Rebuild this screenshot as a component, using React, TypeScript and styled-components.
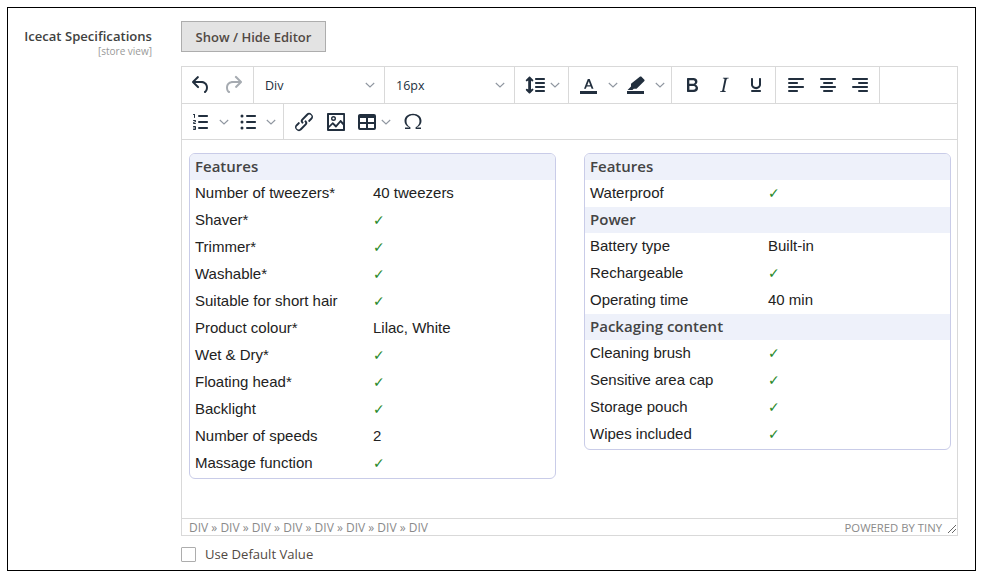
import { FC } from 'react'
import styled, { createGlobalStyle } from 'styled-components'

const GlobalStyle = createGlobalStyle`
  html, body {
    margin: 0;
    padding: 0;
    background: #fff;
  }
`

const Frame = styled.div`
  box-sizing: border-box;
  width: 969px;
  height: 564px;
  margin: 7px 0 0 7px;
  border: 1px solid #000;
  padding: 13px 17px 0 16px;
  display: grid;
  grid-template-columns: 128px 777px;
  column-gap: 29px;
  font-family: 'Open Sans', sans-serif;
`

const LabelColumn = styled.div`
  display: flex;
  flex-direction: column;
  align-items: flex-end;
  padding-top: 6px;
`

const FieldLabel = styled.span`
  font-size: 13.1px;
  line-height: 18px;
  font-weight: 600;
  color: #41423f;
  white-space: nowrap;
`

const Scope = styled.span`
  font-size: 10px;
  line-height: 13px;
  color: #999;
`

const FieldColumn = styled.div`
  display: flex;
  flex-direction: column;
  align-items: flex-start;
`

const ToggleButton = styled.button`
  box-sizing: border-box;
  width: 145px;
  height: 31px;
  padding: 0;
  background: #e3e3e3;
  border: 1px solid #adadad;
  font-family: inherit;
  font-size: 13px;
  font-weight: 600;
  color: #514943;
`

const Editor = styled.div`
  box-sizing: border-box;
  width: 777px;
  height: 470px;
  margin-top: 14px;
  border: 1px solid #d9d9d9;
  display: flex;
  flex-direction: column;
`

const ToolbarRow = styled.div<{ $height: number }>`
  display: flex;
  height: ${(props) => props.$height}px;
  flex: none;
  box-sizing: border-box;
  border-bottom: 1px solid #d9d9d9;
`

const Group = styled.div<{ $width: number; $plain?: boolean }>`
  box-sizing: border-box;
  width: ${(props) => props.$width}px;
  flex: none;
  display: flex;
  align-items: center;
  border-right: ${(props) => (props.$plain ? 'none' : '1px solid #d9d9d9')};
`

const IconSlot = styled.span<{ $width?: number; $lead?: number }>`
  flex: none;
  width: ${(props) => props.$width ?? 32}px;
  margin-left: ${(props) => props.$lead ?? 0}px;
  display: flex;
  align-items: center;
  justify-content: center;
  color: #222f3e;
`

const Select = styled.div<{ $width: number }>`
  box-sizing: border-box;
  width: ${(props) => props.$width}px;
  display: flex;
  align-items: center;
  justify-content: space-between;
  padding: 0 9px 0 11px;
  font-size: 12.5px;
  color: #222f3e;
`

const Content = styled.div`
  flex: 1;
  min-height: 0;
  display: grid;
  grid-template-columns: 367px 367px;
  column-gap: 28px;
  align-items: start;
  padding: 13px 0 0 7px;
`

const SpecTable = styled.div`
  border: 1px solid #c9cce8;
  border-radius: 6px;
  overflow: hidden;
  padding-bottom: 1px;
  font-family: 'Liberation Sans', Arial, sans-serif;
  font-size: 15px;
  color: #222;
`

const SectionHead = styled.div`
  height: 26px;
  line-height: 25px;
  padding-left: 5px;
  background: #eef1fa;
  font-family: 'Open Sans', sans-serif;
  font-size: 15px;
  font-weight: 600;
  color: #444;
`

const SpecRow = styled.div`
  box-sizing: border-box;
  height: 27px;
  display: grid;
  grid-template-columns: 178px 1fr;
  padding: 0 0 2px 5px;
  align-items: center;
`

const Tick = styled.span`
  color: #2a8a2a;
  font-family: 'DejaVu Sans', sans-serif;
  font-size: 14px;
`

const StatusBar = styled.div`
  position: relative;
  flex: none;
  height: 16px;
  border-top: 1px solid #d9d9d9;
  display: flex;
  align-items: center;
  justify-content: space-between;
  padding: 0 15px 0 7px;
  font-size: 12px;
  color: #8a8a8a;
`

const PoweredBy = styled.span`
  font-size: 11.3px;
`

const Resize = styled.svg`
  position: absolute;
  right: 0;
  bottom: 1px;
`

const DefaultRow = styled.label`
  display: flex;
  align-items: center;
  margin-top: 9px;
  font-size: 13.1px;
  color: #514943;
`

const Checkbox = styled.span`
  box-sizing: border-box;
  width: 15px;
  height: 15px;
  margin-right: 9px;
  border: 1px solid #adadad;
  border-radius: 1px;
  background: #fff;
`

const paths: Record<string, string> = {
  undo: 'M6.4 8H12c3.7 0 6.2 2 6.8 5.1.6 2.7-.4 5.6-2.3 6.8a1 1 0 0 1-1-1.8c1.1-.6 1.8-2.7 1.4-4.6-.5-2.1-2.1-3.5-4.9-3.5H6.4l3.3 3.3a1 1 0 1 1-1.4 1.4l-5-5a1 1 0 0 1 0-1.4l5-5a1 1 0 0 1 1.4 1.4L6.4 8z',
  redo: 'M17.6 10H12c-2.8 0-4.4 1.4-4.9 3.5-.4 2 .3 4 1.4 4.6a1 1 0 1 1-1 1.8c-2-1.2-2.9-4.1-2.3-6.8.6-3 3-5.1 6.8-5.1h5.6l-3.3-3.3a1 1 0 1 1 1.4-1.4l5 5a1 1 0 0 1 0 1.4l-5 5a1 1 0 0 1-1.4-1.4l3.3-3.3z',
  lineHeight:
    'M21 5a1 1 0 0 1 .1 2H13a1 1 0 0 1-.1-2H21zm0 4a1 1 0 0 1 .1 2H13a1 1 0 0 1-.1-2H21zm0 4a1 1 0 0 1 .1 2H13a1 1 0 0 1-.1-2H21zm0 4a1 1 0 0 1 .1 2H13a1 1 0 0 1-.1-2H21zM7 3.6l.1.1 3 3a1 1 0 0 1-1.3 1.5H8.7L8 7.4v9.2l.8-.7a1 1 0 0 1 1.3 0h.1c.4.4.4 1 0 1.3v.1l-3 3c-.3.3-.7.4-1 .1h-.1l-3-3a1 1 0 0 1 1.3-1.5h.1l.7.7V7.4l-.8.7a1 1 0 0 1-1.3 0H3a1 1 0 0 1 0-1.3v-.1l3-3c.3-.3.7-.4 1-.1z',
  textColor:
    'M3 18h17v3H3zM10.8 6h1.9l3.8 9.8h-1.9l-.8-2.2H9.7l-.8 2.2H7L10.8 6zm.95 2.3-1.5 3.9h3l-1.5-3.9z',
  highlight:
    'M3 18h17v3H3zM17.2 3.6l3.2 3.2c.3.3.3.8 0 1.1l-7.6 7.6c-.2.2-.5.3-.7.3H9.8l-1.4 1.2H3.6l3.4-3.4v-2.2c0-.3.1-.6.3-.8l8.8-7c.3-.3.8-.3 1.1 0z',
  bold: 'M7.8 19c-.3 0-.5 0-.6-.2l-.2-.5V5.7c0-.2 0-.4.2-.5l.6-.2h5c1.5 0 2.7.3 3.5 1 .7.6 1.1 1.4 1.1 2.5a3 3 0 0 1-.6 1.9c-.4.6-1 1-1.6 1.2.4.1.9.3 1.3.6s.8.7 1 1.2c.4.4.5 1 .5 1.6 0 1.3-.4 2.3-1.3 3-.8.7-2.1 1-3.8 1H7.8zm5-8.3c.6 0 1.2-.1 1.6-.5.4-.3.6-.7.6-1.3 0-1.1-.8-1.7-2.3-1.7H9.3v3.5h3.4zm.5 6c.7 0 1.3-.1 1.7-.4.4-.4.6-.9.6-1.5s-.2-1-.7-1.4c-.4-.3-1-.4-2-.4H9.4v3.8h4z',
  italic:
    'M16.7 4.7l-.1.9h-.3c-.6 0-1 0-1.4.3-.3.3-.4.6-.5 1.1l-2.1 9.8v.6c0 .5.4.8 1.4.8h.2l-.2.8H8l.2-.8h.2c1.1 0 1.8-.5 2-1.5l2-9.8.1-.5c0-.6-.4-.8-1.4-.8h-.3l.2-.9h5.8z',
  underline:
    'M16 5c.6 0 1 .4 1 1v5.5a4 4 0 0 1-.4 1.8l-1 1.4a5.3 5.3 0 0 1-5.5 1 5 5 0 0 1-1.6-1c-.5-.4-.8-.9-1.1-1.4a4 4 0 0 1-.4-1.8V6c0-.6.4-1 1-1s1 .4 1 1v5.5c0 .3 0 .6.2 1l.6.7a3.3 3.3 0 0 0 2.2.8 3.4 3.4 0 0 0 2.2-.8c.3-.2.4-.5.6-.8l.2-.9V6c0-.6.4-1 1-1zM8 17h8c.6 0 1 .4 1 1s-.4 1-1 1H8a1 1 0 0 1 0-2z',
  alignLeft:
    'M5 5h14c.6 0 1 .4 1 1s-.4 1-1 1H5a1 1 0 1 1 0-2zm0 4h8c.6 0 1 .4 1 1s-.4 1-1 1H5a1 1 0 1 1 0-2zm0 8h8c.6 0 1 .4 1 1s-.4 1-1 1H5a1 1 0 0 1 0-2zm0-4h14c.6 0 1 .4 1 1s-.4 1-1 1H5a1 1 0 0 1 0-2z',
  alignCenter:
    'M5 5h14c.6 0 1 .4 1 1s-.4 1-1 1H5a1 1 0 1 1 0-2zm3 4h8c.6 0 1 .4 1 1s-.4 1-1 1H8a1 1 0 1 1 0-2zm0 8h8c.6 0 1 .4 1 1s-.4 1-1 1H8a1 1 0 0 1 0-2zm-3-4h14c.6 0 1 .4 1 1s-.4 1-1 1H5a1 1 0 0 1 0-2z',
  alignRight:
    'M5 5h14c.6 0 1 .4 1 1s-.4 1-1 1H5a1 1 0 1 1 0-2zm6 4h8c.6 0 1 .4 1 1s-.4 1-1 1h-8a1 1 0 0 1 0-2zm0 8h8c.6 0 1 .4 1 1s-.4 1-1 1h-8a1 1 0 0 1 0-2zm-6-4h14c.6 0 1 .4 1 1s-.4 1-1 1H5a1 1 0 0 1 0-2z',
  numList:
    'M10 17h8c.6 0 1 .4 1 1s-.4 1-1 1h-8a1 1 0 0 1 0-2zm0-6h8c.6 0 1 .4 1 1s-.4 1-1 1h-8a1 1 0 0 1 0-2zm0-6h8c.6 0 1 .4 1 1s-.4 1-1 1h-8a1 1 0 1 1 0-2zM6 4v3.5c0 .3-.2.5-.5.5a.5.5 0 0 1-.5-.5V5h-.5a.5.5 0 0 1 0-1H6zm-1 8.8l.2.2h1.3c.3 0 .5.2.5.5s-.2.5-.5.5H4.9a1 1 0 0 1-.9-1V13c0-.4.3-.8.6-1l1.2-.4.2-.3a.2.2 0 0 0-.2-.2H4.5a.5.5 0 0 1-.5-.5c0-.3.2-.5.5-.5h1.6c.5 0 .9.4.9 1v.1c0 .4-.3.8-.6 1l-1.2.4-.2.3zM7 17v2c0 .6-.4 1-1 1H4.5a.5.5 0 0 1 0-1h1.2c.2 0 .3-.1.3-.3 0-.2-.1-.3-.3-.3H4.4a.4.4 0 1 1 0-.8h1.3c.2 0 .3-.1.3-.3 0-.2-.1-.3-.3-.3H4.5a.5.5 0 1 1 0-1H6c.6 0 1 .4 1 1z',
  bulList:
    'M11 5h8c.6 0 1 .4 1 1s-.4 1-1 1h-8a1 1 0 0 1 0-2zm0 6h8c.6 0 1 .4 1 1s-.4 1-1 1h-8a1 1 0 0 1 0-2zm0 6h8c.6 0 1 .4 1 1s-.4 1-1 1h-8a1 1 0 0 1 0-2zM6 4.5a1.5 1.5 0 1 1 0 3 1.5 1.5 0 0 1 0-3zm0 6a1.5 1.5 0 1 1 0 3 1.5 1.5 0 0 1 0-3zm0 6a1.5 1.5 0 1 1 0 3 1.5 1.5 0 0 1 0-3z',
  link: 'M6.2 12.3a1 1 0 0 1 1.4 1.4l-2 2a2 2 0 1 0 2.6 2.8l4.8-4.8a1 1 0 0 0 0-1.4 1 1 0 1 1 1.4-1.3 2.9 2.9 0 0 1 0 4L9.6 20a3.9 3.9 0 0 1-5.5-5.5l2-2zm11.6-.6a1 1 0 0 1-1.4-1.4l2-2a2 2 0 1 0-2.6-2.8L11 10.3a1 1 0 0 0 0 1.4 1 1 0 1 1-1.4 1.3 2.9 2.9 0 0 1 0-4L14.4 4a3.9 3.9 0 0 1 5.5 5.5l-2 2z',
  image:
    'M5 15.7l3.3-3.2c.3-.3.7-.3 1 0L12 15l4.1-4.8c.3-.4.8-.4 1.1 0l2 2.3V5H5v10.7zM5 18.9h14v-3.6l-2.5-2.9-4 4.8c-.4.4-.9.4-1.2 0l-2.6-2.6L5 18.1v.8zM4 3h16c.6 0 1 .4 1 1v16c0 .6-.4 1-1 1H4a1 1 0 0 1-1-1V4c0-.6.4-1 1-1zm5.5 3a2.5 2.5 0 1 1 0 5 2.5 2.5 0 0 1 0-5zm0 1.4a1.1 1.1 0 1 0 0 2.2 1.1 1.1 0 0 0 0-2.2z',
  table:
    'M19 4a2 2 0 0 1 2 2v12a2 2 0 0 1-2 2H5a2 2 0 0 1-2-2V6c0-1.1.9-2 2-2h14zM5 14v4h6v-4H5zm14 0h-6v4h6v-4zm0-6h-6v4h6V8zM5 12h6V8H5v4z',
  omega:
    'M4 19h5.4v-1.7c-2.5-1.2-3.9-3.2-3.9-6 0-3.5 2.5-6 6.5-6s6.5 2.5 6.5 6c0 2.8-1.4 4.8-3.9 6V19H20v-1.5h-4.1v-.2c2.8-1.2 4.6-3.3 4.6-6.3C20.5 6.7 17 3.8 12 3.8S3.5 6.7 3.5 11c0 3 1.8 5.1 4.6 6.3v.2H4V19z',
}

const Icon: FC<{ name: string; muted?: boolean }> = ({ name, muted }) => (
  <svg width='24' height='24' viewBox='0 0 24 24' fill='currentColor' fillRule='evenodd' opacity={muted ? 0.4 : 1}>
    <path d={paths[name]} />
  </svg>
)

const Chevron: FC = () => (
  <svg width='10' height='10' viewBox='0 0 10 10' fill='none' stroke='#8f96a0' strokeWidth='1.1'>
    <path d='M0.8 3 L5 7 L9.2 3' />
  </svg>
)

type Spec = { head: string } | { name: string; value?: string }

const leftSpecs: Spec[] = [
  { head: 'Features' },
  { name: 'Number of tweezers*', value: '40 tweezers' },
  { name: 'Shaver*' },
  { name: 'Trimmer*' },
  { name: 'Washable*' },
  { name: 'Suitable for short hair' },
  { name: 'Product colour*', value: 'Lilac, White' },
  { name: 'Wet & Dry*' },
  { name: 'Floating head*' },
  { name: 'Backlight' },
  { name: 'Number of speeds', value: '2' },
  { name: 'Massage function' },
]

const rightSpecs: Spec[] = [
  { head: 'Features' },
  { name: 'Waterproof' },
  { head: 'Power' },
  { name: 'Battery type', value: 'Built-in' },
  { name: 'Rechargeable' },
  { name: 'Operating time', value: '40 min' },
  { head: 'Packaging content' },
  { name: 'Cleaning brush' },
  { name: 'Sensitive area cap' },
  { name: 'Storage pouch' },
  { name: 'Wipes included' },
]

const Specs: FC<{ items: Spec[] }> = ({ items }) => (
  <SpecTable>
    {items.map((item, index) =>
      'head' in item ? (
        <SectionHead key={index}>{item.head}</SectionHead>
      ) : (
        <SpecRow key={index}>
          <span>{item.name}</span>
          {item.value ? <span>{item.value}</span> : <Tick>✓</Tick>}
        </SpecRow>
      ),
    )}
  </SpecTable>
)

const App: FC = () => (
  <>
    <GlobalStyle />
    <Frame>
      <LabelColumn>
        <FieldLabel>Icecat Specifications</FieldLabel>
        <Scope>[store view]</Scope>
      </LabelColumn>
      <FieldColumn>
        <ToggleButton>Show / Hide Editor</ToggleButton>
        <Editor>
          <ToolbarRow $height={37}>
            <Group $width={72}>
              <IconSlot $lead={3}><Icon name='undo' /></IconSlot>
              <IconSlot><Icon name='redo' muted /></IconSlot>
            </Group>
            <Group $width={131}>
              <Select $width={130}>Div<Chevron /></Select>
            </Group>
            <Group $width={130}>
              <Select $width={129}>16px<Chevron /></Select>
            </Group>
            <Group $width={54}>
              <IconSlot $width={24} $lead={8}><Icon name='lineHeight' /></IconSlot>
              <IconSlot $width={16}><Chevron /></IconSlot>
            </Group>
            <Group $width={103}>
              <IconSlot $width={24} $lead={8}><Icon name='textColor' /></IconSlot>
              <IconSlot $width={16} $lead={4}><Chevron /></IconSlot>
              <IconSlot $width={24} $lead={3}><Icon name='highlight' /></IconSlot>
              <IconSlot $width={16} $lead={4}><Chevron /></IconSlot>
            </Group>
            <Group $width={104}>
              <IconSlot $lead={4}><Icon name='bold' /></IconSlot>
              <IconSlot><Icon name='italic' /></IconSlot>
              <IconSlot><Icon name='underline' /></IconSlot>
            </Group>
            <Group $width={104}>
              <IconSlot $lead={4}><Icon name='alignLeft' /></IconSlot>
              <IconSlot><Icon name='alignCenter' /></IconSlot>
              <IconSlot><Icon name='alignRight' /></IconSlot>
            </Group>
          </ToolbarRow>
          <ToolbarRow $height={36}>
            <Group $width={102}>
              <IconSlot $width={24} $lead={7}><Icon name='numList' /></IconSlot>
              <IconSlot $width={16} $lead={3}><Chevron /></IconSlot>
              <IconSlot $width={24} $lead={4}><Icon name='bulList' /></IconSlot>
              <IconSlot $width={16} $lead={3}><Chevron /></IconSlot>
            </Group>
            <Group $width={160} $plain>
              <IconSlot $lead={4}><Icon name='link' /></IconSlot>
              <IconSlot><Icon name='image' /></IconSlot>
              <IconSlot $width={24} $lead={3}><Icon name='table' /></IconSlot>
              <IconSlot $width={14}><Chevron /></IconSlot>
              <IconSlot $lead={4}><Icon name='omega' /></IconSlot>
            </Group>
          </ToolbarRow>
          <Content>
            <Specs items={leftSpecs} />
            <Specs items={rightSpecs} />
          </Content>
          <StatusBar>
            <span>DIV » DIV » DIV » DIV » DIV » DIV » DIV » DIV</span>
            <PoweredBy>POWERED BY TINY</PoweredBy>
            <Resize width='10' height='10' viewBox='0 0 10 10' stroke='#666' strokeWidth='1'>
              <path d='M1 9 L9 1 M5 9 L9 5' />
            </Resize>
          </StatusBar>
        </Editor>
        <DefaultRow>
          <Checkbox />
          Use Default Value
        </DefaultRow>
      </FieldColumn>
    </Frame>
  </>
)

export default App
